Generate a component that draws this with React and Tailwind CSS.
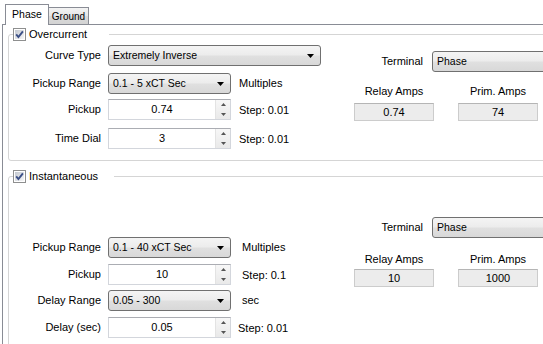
import React from 'react'

// Win7-style relay settings panel (Phase tab)

function Check() {
  return (
    <svg width="13" height="13" viewBox="0 0 13 13" className="shrink-0">
      <defs>
        <linearGradient id="cbfill" x1="0" y1="0" x2="1" y2="1">
          <stop offset="0" stopColor="#c3c8d0" />
          <stop offset="1" stopColor="#f7f7f7" />
        </linearGradient>
      </defs>
      <rect x="0.5" y="0.5" width="12" height="12" fill="#fff" stroke="#8e8f8f" />
      <rect x="2" y="2" width="9" height="9" fill="url(#cbfill)" />
      <path d="M3.2 6.4 5.4 9 9.9 3.3" fill="none" stroke="#3b4f86" strokeWidth="1.9" />
    </svg>
  )
}

function Combo({ w, value, arrow = true }) {
  return (
    <div className={`${w} flex h-[21px] items-center justify-between rounded-[3px] border border-[#707070] bg-[linear-gradient(to_bottom,#f4f4f4,#ececec_48%,#e0e0e0_52%,#d8d8d8)] pl-[4px] pr-[6px] text-[10.5px]`}>
      <span className="whitespace-nowrap">{value}</span>
      {arrow && (
        <svg width="7" height="4" viewBox="0 0 7 4">
          <path d="M0 0h7L3.5 4z" fill="#000" />
        </svg>
      )}
    </div>
  )
}

function Spin({ value }) {
  return (
    <div className="flex h-[21px] w-[123px] border border-[#d3d6dc] border-t-[#abadb3]">
      <div className="flex flex-1 items-center justify-center bg-white">{value}</div>
      <div className="flex w-[15px] flex-col border-l border-[#e3e3e3] bg-[linear-gradient(to_bottom,#f7f7f7,#e9e9e9)]">
        <div className="flex flex-1 items-center justify-center">
          <svg width="5" height="3" viewBox="0 0 5 3"><path d="M0 3h5L2.5 0z" fill="#555" /></svg>
        </div>
        <div className="flex flex-1 items-center justify-center">
          <svg width="5" height="3" viewBox="0 0 5 3"><path d="M0 0h5L2.5 3z" fill="#555" /></svg>
        </div>
      </div>
    </div>
  )
}

function Row({ label, mt, children, after, afterCls = 'ml-[8px]' }) {
  return (
    <div className={`flex h-[21px] items-center ${mt}`}>
      <div className="w-[92px] text-right">{label}</div>
      <div className="ml-[7px]">{children}</div>
      {after && <div className={`${afterCls} whitespace-nowrap`}>{after}</div>}
    </div>
  )
}

function ReadBox({ value }) {
  return (
    <div className="flex h-[18px] items-center justify-center border border-[#cccccc] border-t-[#b5b5b5] bg-[#ececec]">
      {value}
    </div>
  )
}

function Outputs({ termMt, labelMt, boxMt, relay, prim }) {
  return (
    <div className="flex flex-col">
      <div className={`flex h-[21px] items-center ${termMt}`}>
        <div className="w-[69px] text-right">Terminal</div>
        <div className="ml-[9px]">
          <Combo w="w-[150px]" value="Phase" arrow={false} />
        </div>
      </div>
      <div className={`grid grid-cols-[80px_80px] gap-x-[24px] ${labelMt}`}>
        <div className="text-center">Relay Amps</div>
        <div className="text-center">Prim. Amps</div>
      </div>
      <div className={`grid grid-cols-[80px_80px] gap-x-[24px] ${boxMt}`}>
        <ReadBox value={relay} />
        <ReadBox value={prim} />
      </div>
    </div>
  )
}

function Group({ title, mt, pr, pb, children }) {
  return (
    <fieldset className={`ml-[5px] w-[600px] rounded-[3px] border border-[#d5d5d5] ${mt} ${pb}`}>
      <legend className={`ml-[4px] ${pr}`}>
        <span className="flex h-[13px] items-center gap-[3px]">
          <Check />
          <span>{title}</span>
        </span>
      </legend>
      <div className="flex">{children}</div>
    </fieldset>
  )
}

export default function App() {
  return (
    <div className="h-[344px] w-[543px] overflow-hidden bg-white font-['Liberation_Sans',Arial,sans-serif] text-[11px] leading-[13px] text-black">
      <div className="flex items-end pl-[5px] pt-[4px]">
        <div className="relative z-10 flex h-[21px] w-[44px] items-center justify-center border border-b-0 border-[#898c95] bg-white pb-[2px] text-[10.5px]">
          Phase
        </div>
        <div className="-ml-px mb-px flex h-[17px] w-[41px] items-center justify-center border border-b-0 border-[#898c95] bg-[linear-gradient(to_bottom,#f3f3f3,#e6e6e6_50%,#dadada_51%,#d3d3d3)] text-[10px]">
          Ground
        </div>
      </div>

      <div className="-mt-px ml-[2px] h-[400px] border-l border-t border-[#898c95]">
        <Group title="Overcurrent" mt="mt-[3px]" pr="pr-[22px]" pb="pb-[11px]">
          <div className="flex w-[345px] flex-col">
            <Row label="Curve Type" mt="mt-[4px]">
              <Combo w="w-[213px]" value="Extremely Inverse" />
            </Row>
            <Row label="Pickup Range" mt="mt-[7px]" after="Multiples">
              <Combo w="w-[123px]" value="0.1 - 5  xCT Sec" />
            </Row>
            <Row label="Pickup" mt="mt-[5px]" after={<span className="relative top-[1px]">Step: 0.01</span>}>
              <Spin value="0.74" />
            </Row>
            <Row label="Time Dial" mt="mt-[8px]" after={<span className="relative top-[1px]">Step: 0.01</span>}>
              <Spin value="3" />
            </Row>
          </div>
          <Outputs termMt="mt-[10px]" labelMt="mt-[13px]" boxMt="mt-[5px]" relay="0.74" prim="74" />
        </Group>

        <Group title="Instantaneous" mt="mt-[9px]" pr="pr-[16px]" pb="pb-[20px]">
          <div className="flex w-[345px] flex-col">
            <Row label="Pickup Range" mt="mt-[54px]" after="Multiples" afterCls="ml-[11px]">
              <Combo w="w-[123px]" value="0.1 - 40  xCT Sec" />
            </Row>
            <Row label="Pickup" mt="mt-[6px]" after={<span className="relative top-[1px]">Step: 0.1</span>} afterCls="ml-[11px]">
              <Spin value="10" />
            </Row>
            <Row label="Delay Range" mt="mt-[5px]" after="sec" afterCls="ml-[11px]">
              <Combo w="w-[123px]" value="0.05 - 300" />
            </Row>
            <Row label="Delay (sec)" mt="mt-[6px]" after={<span className="relative top-[1px]">Step: 0.01</span>} afterCls="ml-[7px]">
              <Spin value="0.05" />
            </Row>
          </div>
          <Outputs termMt="mt-[34px]" labelMt="mt-[15px]" boxMt="mt-[3px]" relay="10" prim="1000" />
        </Group>
      </div>
    </div>
  )
}
